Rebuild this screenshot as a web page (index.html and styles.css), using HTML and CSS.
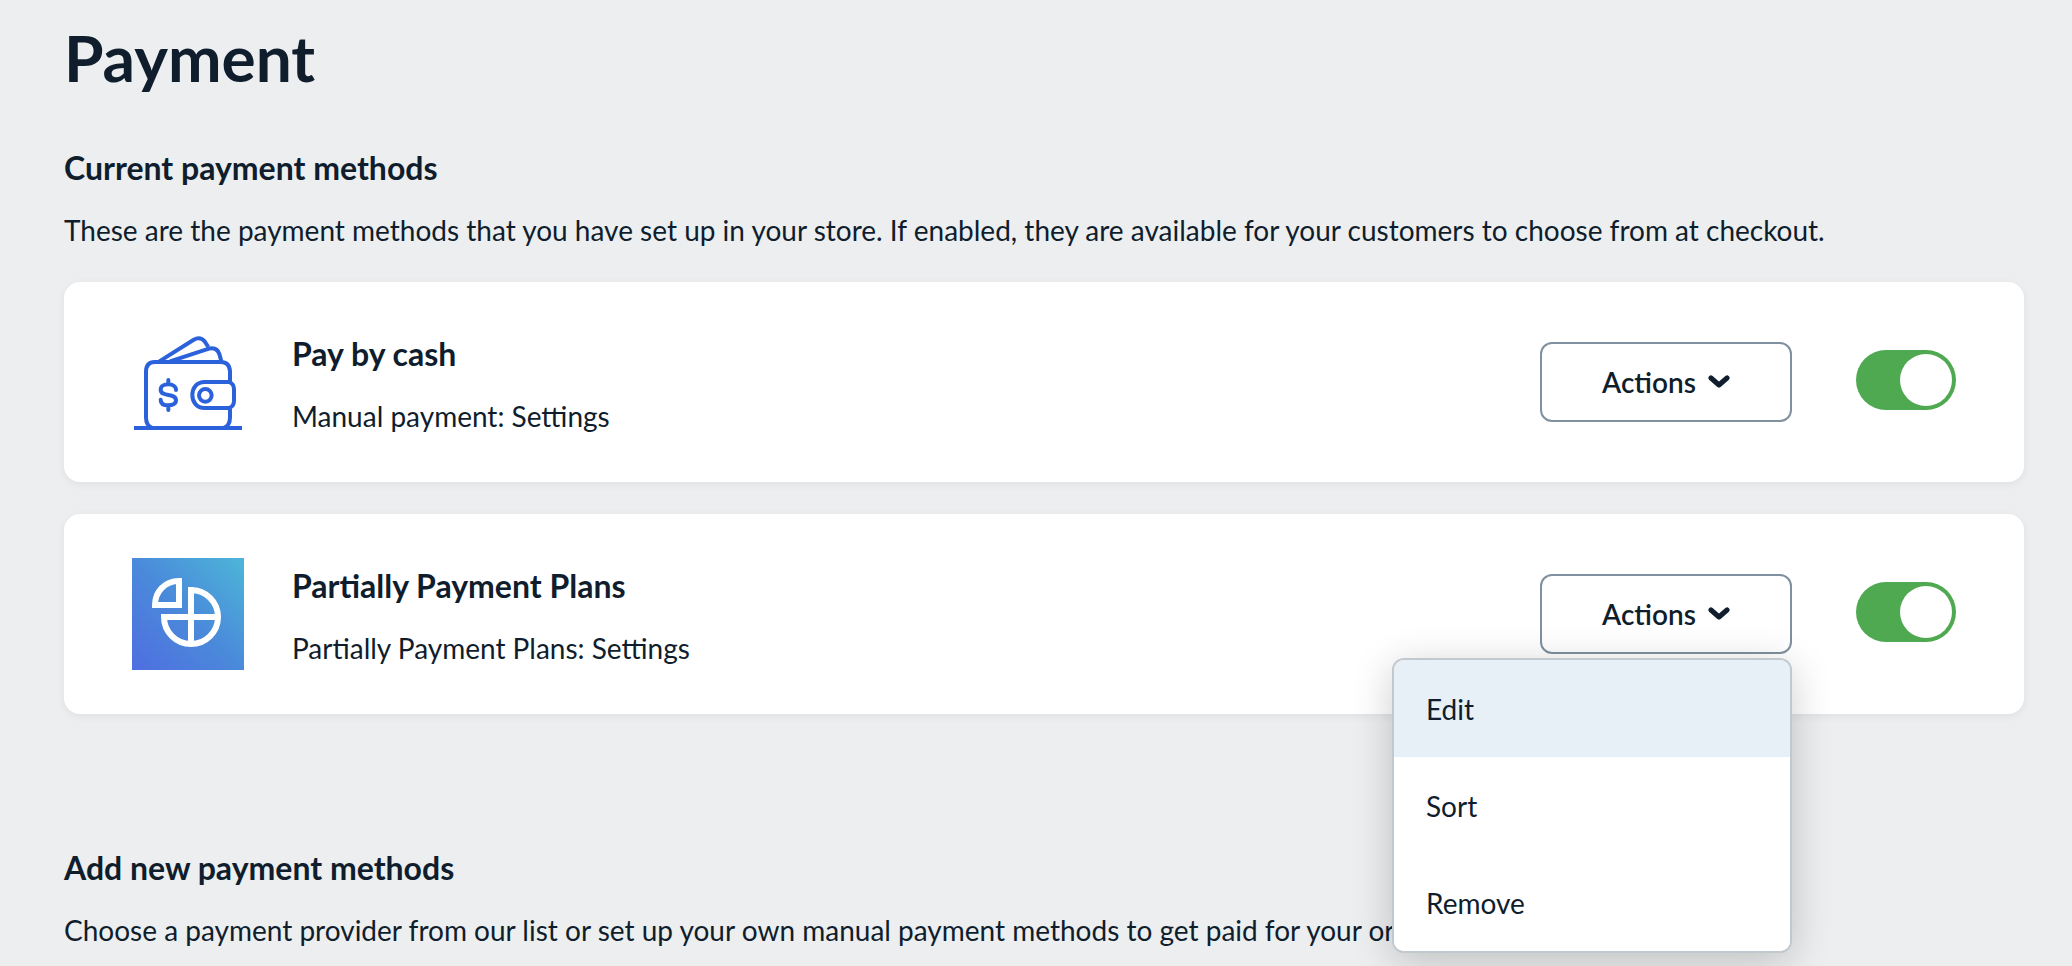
FILE: index.html
```
<!DOCTYPE html>
<html lang="en">
<head>
  <meta charset="UTF-8">
  <meta name="viewport" content="width=device-width, initial-scale=1.0">
  <title>Payment</title>
  <link rel="stylesheet" href="styles.css">
</head>
<body>
  <main>
    <h1>Payment</h1>

    <section>
      <h2>Current payment methods</h2>
      <p>These are the payment methods that you have set up in your store. If enabled, they are available for your customers to choose from at checkout.</p>

      <div class="methods">
        <div class="card">
          <svg class="logo" viewBox="66 48 336 336" fill="none" stroke="#2b62dc" stroke-width="12" aria-hidden="true">
            <path d="M148 154L250 90Q270 78 284 94L295 111"/>
            <path d="M180 154L290 118Q320 108 328 132L334 154"/>
            <path d="M360 214V184Q358 156 332 156H134Q108 156 108 186V322Q108 348 126 353M360 296V322Q360 348 342 353"/>
            <path d="M72 354H396"/>
            <path d="M358 216H284C260 216 247 234 247 255S260 294 284 294H358Q372 288 372 272V238Q372 222 358 216Z"/>
            <circle cx="286" cy="256" r="19"/>
            <path stroke-linecap="round" d="M198 240C198 229 188 223 175 223S152 229 152 239C152 251 163 253 175 255S198 259 198 271C198 281 188 286 175 286S152 281 152 269M175 210V221M175 288V300"/>
          </svg>
          <div class="info">
            <h3>Pay by cash</h3>
            <p>Manual payment: Settings</p>
          </div>
          <div class="actions">
            <button class="actions-btn" type="button">
              Actions
              <svg class="chevron" viewBox="0 0 22 14" aria-hidden="true"><path d="M3 3L11 10L19 3"/></svg>
            </button>
          </div>
          <input class="switch" type="checkbox" aria-label="Enable Pay by cash" checked>
        </div>

        <div class="card">
          <svg class="logo" viewBox="66 54 336 336" fill="none" aria-hidden="true">
            <defs>
              <linearGradient id="plans" x1="0" y1="1" x2="1" y2="0">
                <stop offset="0" stop-color="#4f6ee0"/>
                <stop offset="0.5" stop-color="#4a8ada"/>
                <stop offset="1" stop-color="#4db6d8"/>
              </linearGradient>
            </defs>
            <rect x="66" y="54" width="336" height="336" fill="url(#plans)"/>
            <g stroke="#fff" stroke-width="18">
              <path d="M207 123V195H135C135 154 166 123 207 123Z"/>
              <path d="M243 150A81 81 0 1 1 162 231H324M243 141V312"/>
            </g>
          </svg>
          <div class="info">
            <h3>Partially Payment Plans</h3>
            <p>Partially Payment Plans: Settings</p>
          </div>
          <div class="actions">
            <button class="actions-btn" type="button" aria-expanded="true">
              Actions
              <svg class="chevron" viewBox="0 0 22 14" aria-hidden="true"><path d="M3 3L11 10L19 3"/></svg>
            </button>
            <div class="menu">
              <button class="active" type="button">Edit</button>
              <button type="button">Sort</button>
              <button type="button">Remove</button>
            </div>
          </div>
          <input class="switch" type="checkbox" aria-label="Enable Partially Payment Plans" checked>
        </div>
      </div>
    </section>

    <section>
      <h2>Add new payment methods</h2>
      <p>Choose a payment provider from our list or set up your own manual payment methods to get paid for your orders.</p>
    </section>
  </main>
</body>
</html>
```
FILE: styles.css
```
* {
  box-sizing: border-box;
}
body {
  margin: 0;
  background: #eceeef;
  color: #0f1d2d;
  font-family: Lato, sans-serif;
  font-size: 28px;
  line-height: 44px;
}
main {
  min-height: 100vh;
  padding: 20px 48px 0 64px;
}
h1, h2, h3, p {
  margin: 0;
}
h1 {
  margin-bottom: 48px;
  font-size: 64px;
  line-height: 76px;
}
h2, h3 {
  margin-bottom: 16px;
  font-size: 32px;
  line-height: 48px;
}
.methods {
  display: flex;
  flex-direction: column;
  gap: 32px;
  margin: 30px 0 130px;
}
.card {
  display: flex;
  align-items: center;
  min-height: 200px;
  padding: 44px 68px;
  background: #fff;
  border-radius: 16px;
  box-shadow: 0 2px 8px rgba(15, 29, 45, 0.06);
}
.logo {
  flex: none;
  width: 112px;
  height: 112px;
  margin-right: 48px;
}
.info {
  flex: 1;
  padding-top: 3px;
}
.actions {
  position: relative;
  margin-right: 64px;
}
button {
  border: none;
  color: inherit;
  font: inherit;
  cursor: pointer;
}
.actions-btn {
  display: flex;
  align-items: center;
  justify-content: center;
  gap: 12px;
  width: 252px;
  height: 80px;
  background: #fff;
  border: 2px solid #8090a0;
  border-radius: 12px;
  font-weight: 600;
}
.chevron {
  width: 22px;
  height: 14px;
  fill: none;
  stroke: currentColor;
  stroke-width: 5;
  stroke-linecap: round;
  stroke-linejoin: round;
}
.menu {
  position: absolute;
  z-index: 1;
  top: 100%;
  right: 0;
  width: 400px;
  margin-top: 4px;
  overflow: hidden;
  background: #fff;
  border: 2px solid #c1c8ce;
  border-radius: 12px;
  box-shadow: 0 8px 40px rgba(0, 0, 0, 0.2);
}
.menu button {
  display: block;
  width: 100%;
  padding: 27px 32px 25px;
  background: #fff;
  line-height: 45px;
  text-align: left;
}
.menu .active,
.menu button:hover {
  background: #e7eff7;
}
.switch {
  display: flex;
  appearance: none;
  width: 100px;
  height: 60px;
  margin: 0 0 4px;
  padding: 4px;
  background: #8090a0;
  border-radius: 30px;
  cursor: pointer;
}
.switch::before {
  content: "";
  width: 52px;
  height: 52px;
  background: #fff;
  border-radius: 50%;
}
.switch:checked {
  justify-content: flex-end;
  background: #4fa950;
}
```
